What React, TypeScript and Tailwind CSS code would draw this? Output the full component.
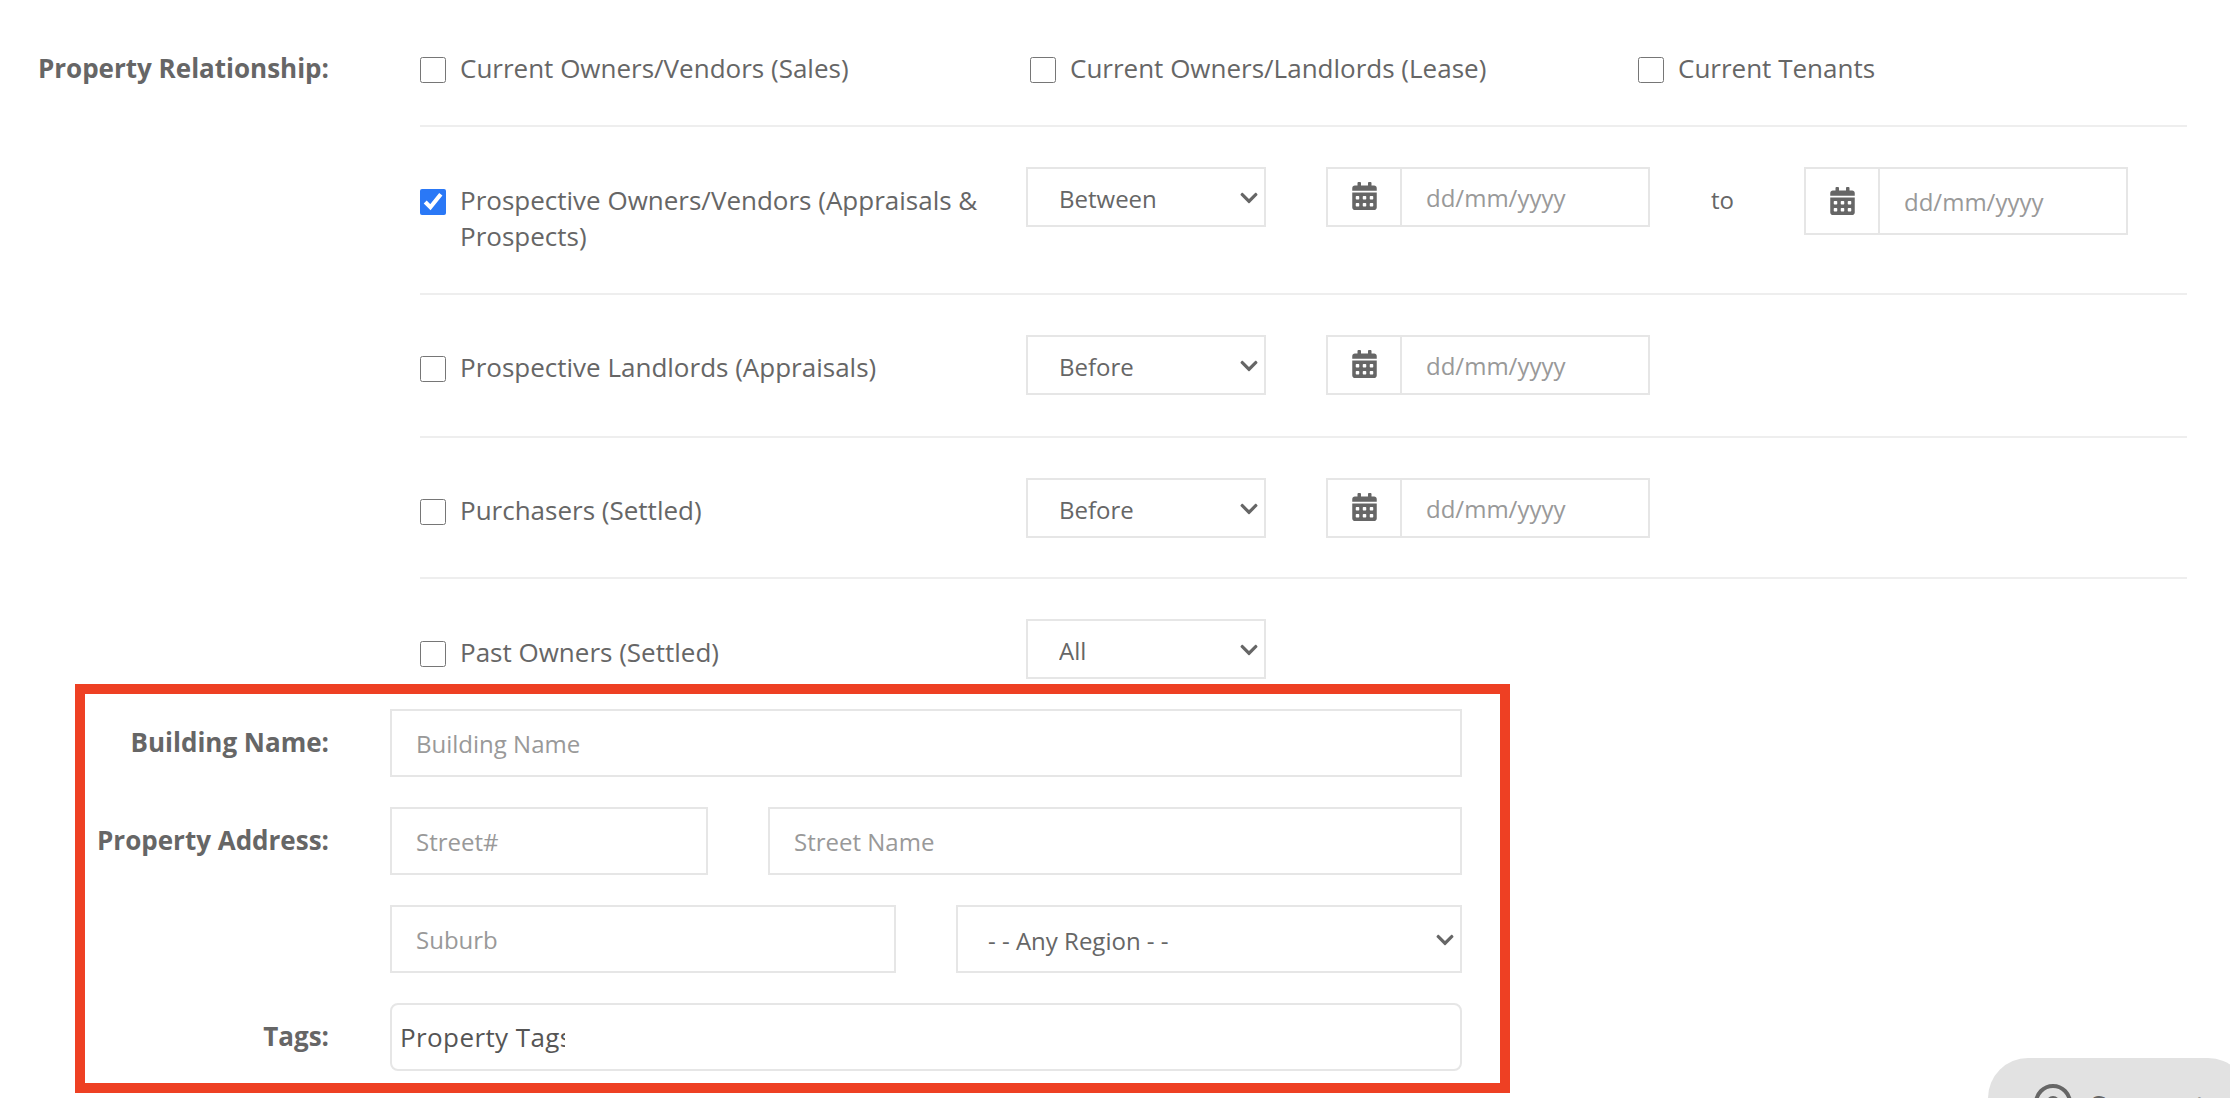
import { FaCalendarAlt, FaChevronDown } from "react-icons/fa";

const fieldBorder = "border-2 border-[#e6e6e6]";

function Check({ label, checked = false }: { label: string; checked?: boolean }) {
  return (
    <label className="flex items-start gap-[14px] text-[#666]">
      <input
        type="checkbox"
        checked={checked}
        readOnly
        className="m-0 mt-[7px] h-[26px] w-[26px] shrink-0 accent-[#2a78f6]"
      />
      <span className="leading-[36px]">{label}</span>
    </label>
  );
}

function SelectBox({
  value,
  className = "w-[240px] h-[60px]",
  pad = "pl-[31px]",
  chevron = "top-[21px]",
}: {
  value: string;
  className?: string;
  pad?: string;
  chevron?: string;
}) {
  return (
    <div className={`relative shrink-0 ${className}`}>
      <select
        defaultValue={value}
        className={`h-full w-full appearance-none rounded-none bg-white ${pad} ${fieldBorder} pt-[4px] text-[24px] text-[#666] outline-none`}
      >
        <option>{value}</option>
      </select>
      <FaChevronDown className={`pointer-events-none absolute right-[8px] h-[20px] w-[18px] text-[#666] ${chevron}`} />
    </div>
  );
}

function DateBox({ tall = false }: { tall?: boolean }) {
  return (
    <div className={`flex w-[324px] shrink-0 ${tall ? "h-[68px]" : "h-[60px]"} ${fieldBorder}`}>
      <div className="flex w-[74px] shrink-0 items-center justify-center border-r-2 border-[#e6e6e6] text-[#666]">
        <FaCalendarAlt className={`h-[28px] w-[25px] ${tall ? "" : "-translate-y-[1px]"}`} />
      </div>
      <input
        placeholder="dd/mm/yyyy"
        className="w-full min-w-0 bg-white pl-[24px] pt-[1px] text-[24px] outline-none placeholder:text-[#999]"
      />
    </div>
  );
}

function TextBox({ placeholder, className = "" }: { placeholder: string; className?: string }) {
  return (
    <input
      placeholder={placeholder}
      className={`h-[68px] min-w-0 bg-white pl-[24px] text-[24px] outline-none placeholder:text-[#999] ${fieldBorder} ${className}`}
    />
  );
}

function FormLabel({ text }: { text: string }) {
  return <div className="w-[329px] shrink-0 -translate-y-[1px] text-right font-bold leading-[36px] text-[#666]">{text}</div>;
}

export default function App() {
  return (
    <div className="relative h-[1098px] w-[2230px] overflow-hidden bg-white font-['Open_Sans',sans-serif] text-[26px] text-[#666]">
      <div className="flex">
        <div className="w-[329px] shrink-0 pt-[50px] text-right font-bold leading-[36px]">Property Relationship:</div>
        <div className="ml-[91px] w-[1767px]">
          <div className="grid grid-cols-[610px_608px_1fr] border-b-2 border-[#eee] pb-[39px] pt-[50px]">
            <Check label="Current Owners/Vendors (Sales)" />
            <Check label="Current Owners/Landlords (Lease)" />
            <Check label="Current Tenants" />
          </div>

          <div className="flex items-start border-b-2 border-[#eee] pb-[39px] pt-[40px]">
            <div className="w-[606px] shrink-0 pr-[26px] pt-[15px]">
              <Check label="Prospective Owners/Vendors (Appraisals & Prospects)" checked />
            </div>
            <SelectBox value="Between" />
            <div className="ml-[60px]">
              <DateBox />
            </div>
            <div className="w-[154px] pl-[61px] pt-[15px] text-[24px] leading-[36px]">to</div>
            <DateBox tall />
          </div>

          <div className="flex items-start border-b-2 border-[#eee] pb-[41px] pt-[40px]">
            <div className="w-[606px] shrink-0 pt-[14px]">
              <Check label="Prospective Landlords (Appraisals)" />
            </div>
            <SelectBox value="Before" />
            <div className="ml-[60px]">
              <DateBox />
            </div>
          </div>

          <div className="flex items-start border-b-2 border-[#eee] pb-[39px] pt-[40px]">
            <div className="w-[606px] shrink-0 pt-[14px]">
              <Check label="Purchasers (Settled)" />
            </div>
            <SelectBox value="Before" />
            <div className="ml-[60px]">
              <DateBox />
            </div>
          </div>

          <div className="flex items-start pt-[40px]">
            <div className="w-[606px] shrink-0 pt-[15px]">
              <Check label="Past Owners (Settled)" />
            </div>
            <SelectBox value="All" />
          </div>
        </div>
      </div>

      <div className="mt-[30px] flex flex-col gap-[30px]">
        <div className="flex items-center gap-[61px]">
          <FormLabel text="Building Name:" />
          <TextBox placeholder="Building Name" className="w-[1072px]" />
        </div>
        <div className="flex items-center gap-[61px]">
          <FormLabel text="Property Address:" />
          <div className="flex w-[1072px] gap-[60px]">
            <TextBox placeholder="Street#" className="w-[318px]" />
            <TextBox placeholder="Street Name" className="flex-1" />
          </div>
        </div>
        <div className="flex items-center gap-[61px]">
          <div className="w-[329px] shrink-0" />
          <div className="flex w-[1072px] gap-[60px]">
            <TextBox placeholder="Suburb" className="w-[506px]" />
            <SelectBox value="- - Any Region - -" className="h-[68px] flex-1" pad="pl-[30px]" chevron="top-[25px]" />
          </div>
        </div>
        <div className="flex items-center gap-[61px]">
          <FormLabel text="Tags:" />
          <div className={`flex h-[68px] w-[1072px] items-center rounded-[8px] pl-[8px] ${fieldBorder}`}>
            <div className="w-[165px] overflow-hidden whitespace-nowrap tracking-[0.4px] text-[#555]">Property Tags</div>
          </div>
        </div>
      </div>

      {/* red annotation round the lower fields */}
      <div className="pointer-events-none absolute left-[75px] top-[684px] h-[409px] w-[1435px] border-[10px] border-[#ee4023]" />

      {/* support bubble, cut off by the window */}
      <div className="absolute left-[1988px] top-[1058px] flex h-[80px] w-[260px] items-start gap-[18px] rounded-[40px] bg-[#e2e2e2] pl-[46px] pt-[26px] font-semibold text-[#666]">
        <span className="flex h-[38px] w-[38px] shrink-0 items-center justify-center rounded-full border-[4px] border-[#666]">
          <span className="h-[14px] w-[14px] rounded-full border-[4px] border-[#666]" />
        </span>
        <span className="mt-[5px] text-[30px] leading-[36px]">Support</span>
      </div>
    </div>
  );
}
